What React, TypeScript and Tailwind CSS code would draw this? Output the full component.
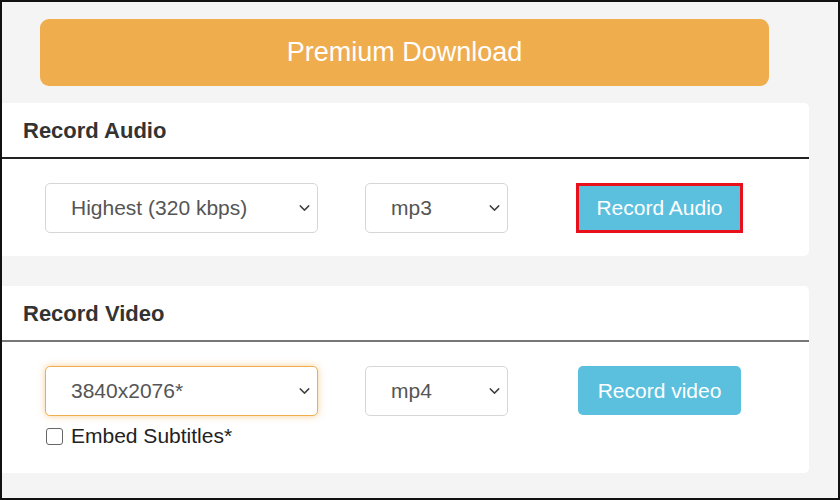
import { ChevronDown } from "lucide-react";

const FONT = { fontFamily: '"Liberation Sans", Arial, sans-serif' };

function Select({
  value,
  width,
  focused = false,
}: {
  value: string;
  width: string;
  focused?: boolean;
}) {
  return (
    <div className={`relative h-[50px] ${width}`}>
      <select
        defaultValue={value}
        className={`h-full w-full appearance-none rounded-[5px] bg-white pl-[25px] text-[21px] text-[#555] outline-none ${
          focused
            ? "border border-[#f0ad4e] shadow-[0_0_7px_rgba(240,173,78,0.6)]"
            : "border border-[#d6d6d6]"
        }`}
      >
        <option>{value}</option>
      </select>
      <ChevronDown
        className="pointer-events-none absolute right-[5px] top-1/2 h-[17px] w-[17px] -translate-y-1/2 text-[#444]"
        strokeWidth={2}
      />
    </div>
  );
}

export default function App() {
  return (
    <div
      style={FONT}
      className="h-[500px] w-[840px] overflow-hidden border-2 border-[#111] bg-[#f4f4f4]"
    >
      {/* Premium */}
      <div className="pl-[38px] pt-[17px]">
        <button className="flex h-[67px] w-[729px] items-center justify-center rounded-[9px] bg-[#efad4e] text-[27px] text-white">
          Premium Download
        </button>
      </div>

      {/* Record Audio */}
      <section className="mt-[17px] w-[807px] rounded-r-[5px] bg-white">
        <div className="flex h-[54px] items-center pl-[21px] pt-[1px]">
          <h2 className="text-[22px] font-bold text-[#333]">Record Audio</h2>
        </div>
        <div className="h-[2px] bg-[#222]" />
        <div className="flex items-start pb-[23px] pl-[43px] pt-[24px]">
          <Select value="Highest (320 kbps)" width="w-[273px]" />
          <div className="ml-[47px]">
            <Select value="mp3" width="w-[143px]" />
          </div>
          <button className="ml-[68px] flex h-[50px] w-[167px] items-center justify-center border-[3px] border-[#e8101a] bg-[#5bc0de] text-[21px] text-white">
            Record Audio
          </button>
        </div>
      </section>

      {/* Record Video */}
      <section className="mt-[30px] w-[807px] rounded-r-[5px] bg-white">
        <div className="flex h-[54px] items-center pl-[21px] pt-[1px]">
          <h2 className="text-[22px] font-bold text-[#333]">Record Video</h2>
        </div>
        <div className="h-[2px] bg-[#777]" />
        <div className="flex items-start pb-[25px] pl-[43px] pt-[24px]">
          <div>
            <Select value="3840x2076*" width="w-[273px]" focused />
            <label className="mt-[8px] flex items-center gap-[8px] pl-[1px] text-[21px] leading-[24px] text-[#222]">
              <span className="h-[17px] w-[17px] rounded-[3px] border border-[#666] bg-white" />
              Embed Subtitles*
            </label>
          </div>
          <div className="ml-[47px]">
            <Select value="mp4" width="w-[143px]" />
          </div>
          <button className="ml-[70px] flex h-[49px] w-[163px] items-center justify-center rounded-[5px] bg-[#5bc0de] text-[21px] text-white">
            Record video
          </button>
        </div>
      </section>
    </div>
  );
}
